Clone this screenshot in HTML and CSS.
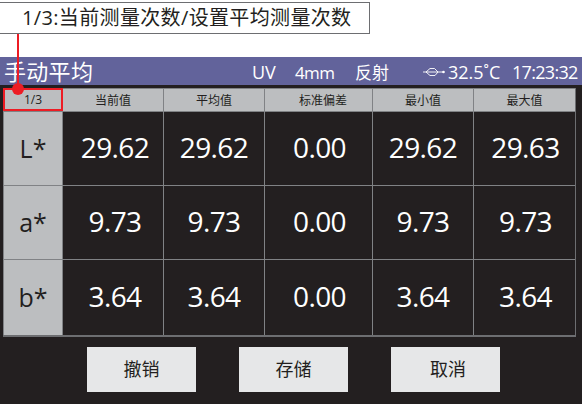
FILE: index.html
```html
<!DOCTYPE html>
<html lang="en">
<head>
    <meta charset="UTF-8">
    <title>手动平均</title>
    <link rel="stylesheet" href="styles.css">
</head>
<body>
    <div class="callout">1/3:当前测量次数/设置平均测量次数</div>
    <div class="pointer"></div>

    <div class="screen">
        <div class="titlebar">
            <span class="title">手动平均</span>
            <span class="status status-uv">UV</span>
            <span class="status status-mm">4mm</span>
            <span class="status status-mode">反射</span>
            <svg class="usb" width="22" height="12" viewBox="0 0 22 12">
                <path d="M0 6H20M3 6L7 2.5H11.5L15 6M3 6L7 9.5H12L15 6" fill="none" stroke="#fff" stroke-width="0.9"/>
                <circle cx="20.5" cy="6" r="1.3" fill="#fff"/>
            </svg>
            <span class="status status-temp">32.5˚C</span>
            <span class="status status-time">17:23:32</span>
        </div>

        <div class="table">
            <div class="head marked">1/3</div>
            <div class="head">当前值</div>
            <div class="head">平均值</div>
            <div class="head std">标准偏差</div>
            <div class="head">最小值</div>
            <div class="head">最大值</div>

            <div class="label">L*</div>
            <div class="cell first">29.62</div>
            <div class="cell">29.62</div>
            <div class="cell std">0.00</div>
            <div class="cell">29.62</div>
            <div class="cell last">29.63</div>

            <div class="label">a*</div>
            <div class="cell first">9.73</div>
            <div class="cell">9.73</div>
            <div class="cell std">0.00</div>
            <div class="cell">9.73</div>
            <div class="cell last">9.73</div>

            <div class="label">b*</div>
            <div class="cell first">3.64</div>
            <div class="cell">3.64</div>
            <div class="cell std">0.00</div>
            <div class="cell">3.64</div>
            <div class="cell last">3.64</div>
        </div>

        <div class="buttons">
            <div class="btn">撤销</div>
            <div class="btn">存储</div>
            <div class="btn btn-cancel">取消</div>
        </div>
    </div>
</body>
</html>
```

FILE: styles.css
```css
* {
    box-sizing: border-box;
}

html, body {
    margin: 0;
    height: 404px;
    overflow: hidden;
    background-color: #fff;
}

body {
    position: relative;
    font-family: "Open Sans", "Noto Sans CJK SC", sans-serif;
    color: #231f20;
}

/* Callout above the screen */
.callout {
    height: 32px;
    width: 370px;
    margin-top: 2px;
    padding-left: 22px;
    border: 1px solid #6d6e71;
    border-left: none;
    font-size: 20px;
    line-height: 30px;
    letter-spacing: 0.35px;
    white-space: nowrap;
}

.pointer {
    position: absolute;
    left: 12px;
    top: 34px;
    width: 12px;
    height: 61px;
    z-index: 5;
    background: linear-gradient(#ed1c24, #ed1c24) center top / 2px 54px no-repeat;
}

.pointer::after {
    content: "";
    position: absolute;
    left: 0;
    bottom: 0;
    width: 12px;
    height: 12px;
    border-radius: 50%;
    background-color: #ed1c24;
}

.screen {
    margin-top: 23px;
    height: 347px;
    background-color: #231f20;
}

/* Title bar */
.titlebar {
    position: relative;
    height: 28px;
    background-color: #62639b;
    color: #fff;
}

.title {
    position: absolute;
    left: 4px;
    top: 0;
    font-size: 22px;
    line-height: 29px;
    letter-spacing: 0.3px;
}

.status {
    position: absolute;
    top: 0;
    font-size: 18px;
    line-height: 31px;
    white-space: nowrap;
}

.status-uv { left: 252px; }
.status-mm { left: 295px; font-size: 17px; letter-spacing: -0.6px; }
.status-mode { left: 355px; font-size: 17px; }
.status-temp { left: 448px; }
.status-time { left: 512px; letter-spacing: -0.7px; }

.usb {
    position: absolute;
    left: 423px;
    top: 9px;
}

/* Results table */
.table {
    display: grid;
    grid-template-columns: 59px 101px 101px 108px 101px 102px;
    grid-template-rows: 23px 74px 74px 76px;
    margin: 3px 0 0 3px;
    width: 573px;
    border-right: 1px solid #6d6e71;
    border-bottom: 2px solid #6d6e71;
}

.head {
    display: flex;
    align-items: center;
    justify-content: center;
    padding-bottom: 1px;
    background-color: #bcbec0;
    border-top: 1px solid #808285;
    border-left: 1px solid #808285;
    font-size: 12px;
}

.head.marked {
    position: relative;
    z-index: 1;
    margin-right: -1px;
    border: 2px solid #ed1c24;
}

.head.std {
    padding-left: 9px;
}

.label {
    display: flex;
    align-items: center;
    justify-content: center;
    padding-bottom: 2px;
    background-color: #bcbec0;
    border-top: 1px solid #808285;
    border-left: 1px solid #808285;
    font-size: 25px;
}

.cell {
    display: flex;
    align-items: center;
    justify-content: center;
    padding-bottom: 3px;
    border-top: 1px solid #808285;
    border-left: 1px solid #808285;
    color: #fff;
    font-size: 28px;
    letter-spacing: -0.6px;
}

.cell.first {
    padding-left: 4px;
}

.cell.std {
    padding-left: 2px;
}

.cell.last {
    padding-left: 2px;
}

/* Bottom buttons */
.buttons {
    display: flex;
    gap: 43px;
    margin: 10px 0 0 87px;
}

.btn {
    width: 109px;
    height: 45px;
    display: flex;
    align-items: center;
    justify-content: center;
    padding-bottom: 3px;
    background-color: #e6e7e8;
    font-size: 18px;
}

.btn-cancel {
    padding-left: 5px;
}
```
